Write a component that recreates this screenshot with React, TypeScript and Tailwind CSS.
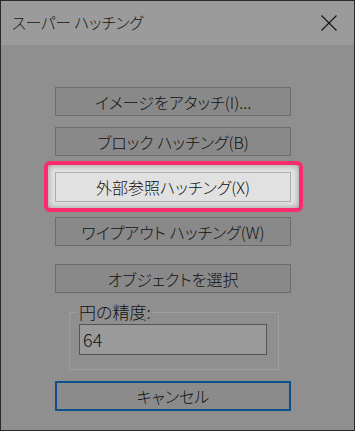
import React from "react";

const jp = "font-['Noto_Sans_CJK_JP','Noto_Sans',sans-serif] [font-feature-settings:'palt'] font-light";

function DialogButton({ label, className = "" }: { label: string; className?: string }) {
  return (
    <button
      type="button"
      className={`flex h-[29px] w-[236px] items-center justify-center border border-[#6d6d6d] bg-[#898989] text-[16px] leading-none text-[#111] ${className}`}
    >
      {label}
    </button>
  );
}

export default function App() {
  return (
    <div className={`flex h-[431px] w-[355px] flex-col border border-[#2a2a2a] bg-[#8f8f8f] ${jp}`}>
      {/* Title bar */}
      <div className="flex h-[44px] shrink-0 items-center justify-between bg-[#9b9b9b] pl-[11px] pr-[17px]">
        <span className="text-[15.5px] text-[#141414]">スーパー ハッチング</span>
        <svg width="16" height="16" viewBox="0 0 16 16" className="text-[#141414]">
          <path d="M0.5 0.5 L15.5 15.5 M15.5 0.5 L0.5 15.5" stroke="currentColor" strokeWidth="1.1" />
        </svg>
      </div>

      {/* Body */}
      <div className="flex flex-col pl-[54px] pt-[42px]">
        <DialogButton label="イメージをアタッチ(I)..." />
        <DialogButton label="ブロック ハッチング(B)" className="mt-[11px]" />

        {/* Highlighted button */}
        <div className="-ml-[11px] mt-[5px] h-[51px] w-[259px] rounded-[6px] border-[4px] border-[#fb2a6c] bg-[#e2e2e2] pl-[7px] pt-[7px] shadow-[inset_0_0_6px_rgba(0,0,0,0.35)]">
          <button
            type="button"
            className="flex h-[30px] w-[236px] items-center justify-center border border-[#adadad] bg-[#e1e1e1] text-[16px] leading-none text-[#111]"
          >
            外部参照ハッチング(X)
          </button>
        </div>

        <DialogButton label="ワイプアウト ハッチング(W)" className="mt-[5px]" />
        <DialogButton label="オブジェクトを選択" className="mt-[18px]" />

        {/* Group box */}
        <fieldset className="ml-[14px] mt-[10px] h-[67px] w-[210px] border border-[#9d9d9d] px-[9px]">
          <legend className="ml-[-1px] px-[1px] text-[17px] leading-[18px] text-[#111]">円の精度:</legend>
          <div className="mt-[3px] flex h-[31px] w-[188px] items-center border border-[#555] bg-[#9a9a9a] pl-[3px] text-[18px] text-[#111]">
            64
          </div>
        </fieldset>

        <button
          type="button"
          className="mt-[11px] flex h-[30px] w-[236px] items-center justify-center border-2 border-[#0d4e8b] bg-[#8b8b8b] text-[16px] leading-none text-[#111]"
        >
          キャンセル
        </button>
      </div>
    </div>
  );
}
